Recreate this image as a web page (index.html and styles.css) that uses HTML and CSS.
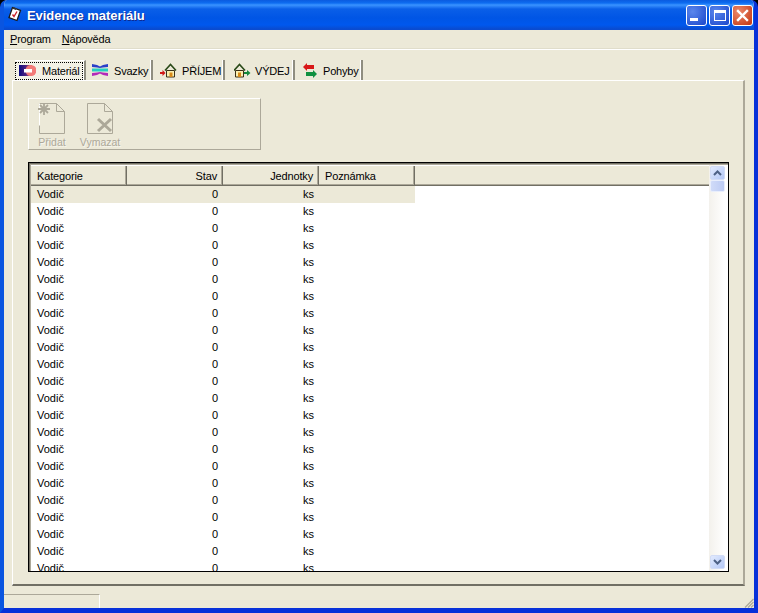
FILE: index.html
```html
<!DOCTYPE html>
<html lang="cs">
<head>
<meta charset="utf-8">
<title>Evidence materiálu</title>
<link rel="stylesheet" href="styles.css">
</head>
<body>
<div class="window">
  <header class="titlebar">
    <svg class="app-icon" width="16" height="16" viewBox="0 0 16 16"><path d="M5.500 1.500 13.500 4.500 10 14.500 2 11.500z" fill="#fff" stroke="#1a1a1a" stroke-width="1.300"/><path d="M6 1l3.500 1.300-.6 1.700-3.500-1.300z" fill="#333"/><path d="M5.500 8.500l1.500 2 3-5" fill="none" stroke="#c8202a" stroke-width="1.400"/></svg>
    <span class="title">Evidence materiálu</span>
    <div class="caption-btns">
      <div class="cbtn"><span class="min-glyph"></span></div>
      <div class="cbtn"><span class="max-glyph"></span></div>
      <div class="cbtn close"><svg width="13" height="13" viewBox="0 0 13 13"><path d="M2 2l9 9M11 2l-9 9" stroke="#fff" stroke-width="2.400" stroke-linecap="square"/></svg></div>
    </div>
  </header>
  <nav class="menubar">
    <span class="menu"><u>P</u>rogram</span>
    <span class="menu"><u>N</u>ápověda</span>
  </nav>
  <div class="tabs">
    <div class="tab tab-active"><div class="tab-focus">
      <svg width="17" height="11" viewBox="0 0 17 11"><defs><linearGradient id="mat" x1="0" x2="1"><stop offset="0" stop-color="#0a0a80"/><stop offset=".5" stop-color="#4a2080"/><stop offset="1" stop-color="#f06a6a"/></linearGradient></defs><rect x="0" y="0" width="13" height="11" fill="url(#mat)"/><circle cx="12" cy="5.500" r="5.500" fill="#f27a78"/><rect x="5" y="4" width="8" height="3.500" fill="#fff"/></svg>
      <span>Materiál</span></div></div>
    <div class="tab w2">
      <svg width="17" height="12" viewBox="0 0 17 12"><path d="M0 0l5 1 3 1.500L11 1l5-1v3l-5 0.500-3 .5-3-.5L0 3z" fill="#2a3fc8"/><path d="M0 4.500h16v3H0z" fill="#25cfc0"/><path d="M0 9l5-.5 3-.5 3 .5 5 .5v3l-5-1-3-1.500L5 11l-5 1z" fill="#b32ab8"/></svg>
      <span>Svazky</span></div>
    <div class="tab w3">
      <svg width="17" height="15" viewBox="0 0 17 15"><path d="M5 7.500 10.500 1.500 16 7.500" fill="none" stroke="#2a4a18" stroke-width="1.600"/><path d="M6.500 7.500h8v6.500h-8z" fill="#fbf0b0" stroke="#3a3018"/><path d="M9.500 9.500h3v4.500h-3z" fill="#d88a18"/><path d="M0 9h2.500V7l3 3-3 3v-2H0z" fill="#d01818"/></svg>
      <span>PŘÍJEM</span></div>
    <div class="tab w4">
      <svg width="17" height="15" viewBox="0 0 17 15"><path d="M0 7.500 5.500 1.500 11 7.500" fill="none" stroke="#2a4a18" stroke-width="1.600"/><path d="M1.500 7.500h8v6.500h-8z" fill="#fbf0b0" stroke="#3a3018"/><path d="M4 9.500h3v4.500H4z" fill="#d88a18"/><path d="M10 9h3V7l3.500 3-3.500 3v-2h-3z" fill="#158a3a"/></svg>
      <span>VÝDEJ</span></div>
    <div class="tab w5">
      <svg width="14" height="15" viewBox="0 0 14 15"><path d="M0 4l4-4v2h7v4H4v2z" fill="#d81818"/><path d="M14 11l-4-4v2H3v4h7v2z" fill="#109040"/></svg>
      <span>Pohyby</span></div>
  </div>
  <main class="page">
    <section class="toolbar">
      <div class="tool">
        <svg width="28" height="33" viewBox="0 0 28 33"><path d="M1.500 1.500h17l8 8v22h-25z" fill="none" stroke="#aca899"/><path d="M18.500 1.500v8h8" fill="none" stroke="#aca899"/><path d="M1.500 1.500v22" stroke="#fff"/><path d="M6 1v12M0 7h12M2 3l8 8M10 3l-8 8" stroke="#aca899" stroke-width="1.800"/></svg>
        <span>Přidat</span>
      </div>
      <div class="tool">
        <svg width="28" height="33" viewBox="0 0 28 33"><path d="M1.500 1.500h17l8 8v22h-25z" fill="none" stroke="#aca899"/><path d="M18.500 1.500v8h8" fill="none" stroke="#aca899"/><path d="M12 17l13 12M25 17L12 29" stroke="#aca899" stroke-width="3"/></svg>
        <span>Vymazat</span>
      </div>
    </section>
    <section class="table">
      <div class="table-main">
        <div class="head">
          <div class="hcell">Kategorie</div>
          <div class="hcell num">Stav</div>
          <div class="hcell num">Jednotky</div>
          <div class="hcell">Poznámka</div>
        </div>
        <div class="rows">
          <div class="row selected"><span>Vodič</span><span class="num">0</span><span class="num">ks</span><span></span></div>
          <div class="row"><span>Vodič</span><span class="num">0</span><span class="num">ks</span><span></span></div>
          <div class="row"><span>Vodič</span><span class="num">0</span><span class="num">ks</span><span></span></div>
          <div class="row"><span>Vodič</span><span class="num">0</span><span class="num">ks</span><span></span></div>
          <div class="row"><span>Vodič</span><span class="num">0</span><span class="num">ks</span><span></span></div>
          <div class="row"><span>Vodič</span><span class="num">0</span><span class="num">ks</span><span></span></div>
          <div class="row"><span>Vodič</span><span class="num">0</span><span class="num">ks</span><span></span></div>
          <div class="row"><span>Vodič</span><span class="num">0</span><span class="num">ks</span><span></span></div>
          <div class="row"><span>Vodič</span><span class="num">0</span><span class="num">ks</span><span></span></div>
          <div class="row"><span>Vodič</span><span class="num">0</span><span class="num">ks</span><span></span></div>
          <div class="row"><span>Vodič</span><span class="num">0</span><span class="num">ks</span><span></span></div>
          <div class="row"><span>Vodič</span><span class="num">0</span><span class="num">ks</span><span></span></div>
          <div class="row"><span>Vodič</span><span class="num">0</span><span class="num">ks</span><span></span></div>
          <div class="row"><span>Vodič</span><span class="num">0</span><span class="num">ks</span><span></span></div>
          <div class="row"><span>Vodič</span><span class="num">0</span><span class="num">ks</span><span></span></div>
          <div class="row"><span>Vodič</span><span class="num">0</span><span class="num">ks</span><span></span></div>
          <div class="row"><span>Vodič</span><span class="num">0</span><span class="num">ks</span><span></span></div>
          <div class="row"><span>Vodič</span><span class="num">0</span><span class="num">ks</span><span></span></div>
          <div class="row"><span>Vodič</span><span class="num">0</span><span class="num">ks</span><span></span></div>
          <div class="row"><span>Vodič</span><span class="num">0</span><span class="num">ks</span><span></span></div>
          <div class="row"><span>Vodič</span><span class="num">0</span><span class="num">ks</span><span></span></div>
          <div class="row"><span>Vodič</span><span class="num">0</span><span class="num">ks</span><span></span></div>
          <div class="row"><span>Vodič</span><span class="num">0</span><span class="num">ks</span><span></span></div>
        </div>
      </div>
      <div class="scrollbar">
        <div class="sbtn"><svg width="9" height="6" viewBox="0 0 9 6"><path d="M1 5l3.500-3.500L8 5" fill="none" stroke="#4d6185" stroke-width="2"/></svg></div>
        <div class="thumb"></div>
        <div class="track"></div>
        <div class="sbtn"><svg width="9" height="6" viewBox="0 0 9 6"><path d="M1 1l3.500 3.500L8 1" fill="none" stroke="#4d6185" stroke-width="2"/></svg></div>
      </div>
    </section>
  </main>
  <footer class="status">
    <div class="status-pane"></div>
    <svg class="grip" width="10" height="10" viewBox="0 0 10 10"><path d="M9.500 1L1 9.500M9.500 4L4 9.500M9.500 7L7 9.500" stroke="#aca899" stroke-width="1.200"/></svg>
  </footer>
</div>
</body>
</html>
```
FILE: styles.css
```css
* { box-sizing: border-box; }
html, body { margin: 0; padding: 0; background: #000; }
body { font: 11px "Liberation Sans", Arial, sans-serif; color: #000; }
.window {
  width: 758px; height: 613px; display: flex; flex-direction: column;
  background: #ece9d8; overflow: hidden; border-radius: 7px 7px 0 0;
  border-left: 4px solid #0a55e0; border-right: 4px solid #0831d9; border-bottom: 5px solid #0831d9;
}
.titlebar {
  height: 30px; margin: 0 -4px; padding: 0 5px 0 7px; flex: none;
  display: flex; align-items: center; gap: 4px;
  background: linear-gradient(#0a5be0 0, #0d6cf0 3px, #3a93ff 5px, #0a5fe8 9px, #0055e5 18px, #0058ee 25px, #0a4bd0 29px);
  color: #fff;
}
.app-icon { flex: none; margin-bottom: 3px; }
.title { font: bold 13px "Liberation Sans", sans-serif; letter-spacing: -0.05px; text-shadow: 1px 1px 0 #0f2a90; }
.caption-btns { margin-left: auto; display: flex; gap: 2px; }
.cbtn {
  width: 21px; height: 21px; border: 1px solid #fff; border-radius: 3px;
  background: radial-gradient(circle at 30% 30%, #5a86ec, #2450d0 85%);
  position: relative; display: flex; align-items: center; justify-content: center;
}
.cbtn.close { background: radial-gradient(circle at 30% 30%, #ec8a6c, #c8401c 85%); }
.min-glyph { width: 8px; height: 3px; background: #fff; margin: 9px 5px 0 0; }
.max-glyph { width: 12px; height: 11px; border: 1px solid #fff; border-top-width: 3px; }
.menubar {
  height: 20px; flex: none; display: flex; gap: 11px; align-items: center;
  padding: 0 0 1px 6px; border-bottom: 1px solid #fff; box-shadow: inset 0 -1px 0 #e0ddcb;
  letter-spacing: -0.2px;
}
.tabs { display: flex; height: 30px; padding: 10px 0 0 11px; gap: 2px; flex: none; letter-spacing: -0.2px; }
.tab {
  height: 20px; display: flex; align-items: center; gap: 5px; padding-left: 5px;
  border-right: 2px solid #8f8d80; box-shadow: inset -1px 0 0 #fff; position: relative;
}
.tab span { position: relative; top: 1px; }
.tab-active { width: 71px; padding: 0 1px 0 0; background: #f3f1e6; border-top: 1px solid #fff; }
.tab-focus { flex: 1; height: 18px; border: 1px dotted #000; display: flex; align-items: center; gap: 6px; padding-left: 3px; }
.tab-focus span { top: 0; }
.w2 { width: 65px; padding-left: 4px; gap: 5px; }
.w3 { width: 70px; }
.w4 { width: 68px; padding-left: 7px; gap: 4px; }
.w5 { width: 66px; padding-left: 6px; gap: 6px; }
.page {
  flex: 1; min-height: 0; margin: 0 9px 0 8px; padding: 17px 14px 12px 15px;
  display: flex; flex-direction: column; gap: 12px;
  border: 1px solid #fff; border-right: 2px solid #aca899; border-bottom: 2px solid #716f64;
}
.toolbar {
  height: 52px; width: 233px; flex: none; display: flex; gap: 8px;
  padding: 3px 0 0 3px;
  border: 1px solid #fff; border-right-color: #aca899; border-bottom-color: #aca899;
}
.tool { width: 40px; display: flex; flex-direction: column; align-items: center; gap: 1px; color: #aca899; font-size: 10.500px; white-space: nowrap; text-shadow: 1px 1px 0 #fff8; }
.table {
  flex: 1; min-height: 0; display: flex; background: #fff;
  border: 1px solid #000; box-shadow: inset 1px 1px 0 #716f64, inset 2px 2px 0 #aca899;
  padding: 2px 3px 0 2px;
}
.table-main { flex: 1; min-width: 0; display: flex; flex-direction: column; }
.head { height: 21px; flex: none; display: flex; background: #ece9d8; border-bottom: 1px solid #716f64; border-top: 1px solid #fff; box-shadow: inset 0 -1px 0 #aca899; letter-spacing: -0.15px; }
.hcell { width: 96px; padding: 2px 5px 0 6px; line-height: 17px; border-right: 1px solid #716f64; box-shadow: inset -1px 0 0 #aca899; }
.hcell.num { text-align: right; }
.rows { flex: 1; min-height: 0; overflow: hidden; }
.row { display: grid; grid-template-columns: 96px 96px 96px 96px; width: 384px; height: 17px; line-height: 17px; }
.row span { padding: 0 5px 0 6px; }
.row .num { text-align: right; }
.row.selected { background: #ece9d8; }
.scrollbar { width: 16px; flex: none; display: flex; flex-direction: column; background: linear-gradient(90deg, #f3f1ec, #fff); padding: 1px 0 2px 1px; }
.sbtn { height: 14px; flex: none; display: flex; align-items: center; justify-content: center; background: linear-gradient(135deg, #e1eafe, #b4c8f6); border: 1px solid #d2dcf6; border-radius: 2px; }
.thumb { height: 12px; flex: none; background: linear-gradient(90deg, #d0dbf8, #bccbf4); border: 1px solid #e8eefc; border-radius: 2px; }
.track { flex: 1; }
.status { height: 22px; flex: none; position: relative; display: flex; align-items: flex-end; }
.status-pane { width: 96px; height: 14px; border-top: 1px solid #aca899; border-right: 1px solid #fff; }
.grip { position: absolute; right: 0; bottom: 0; }
```
